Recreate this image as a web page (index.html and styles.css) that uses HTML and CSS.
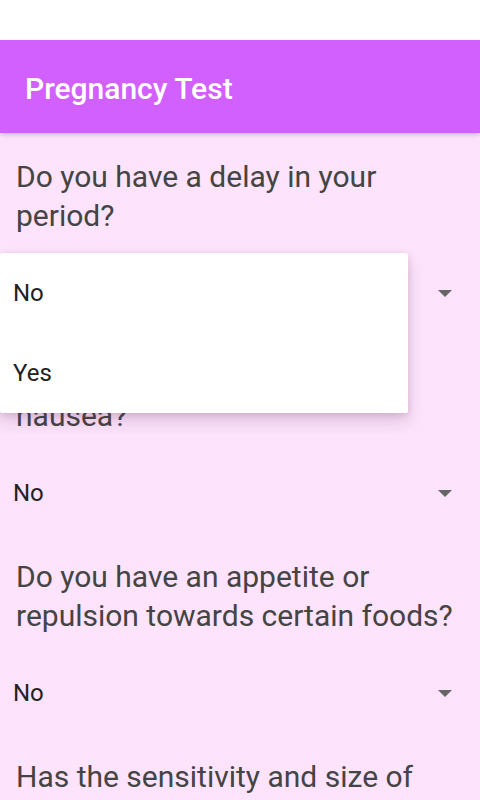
FILE: index.html
```html
<!DOCTYPE html>
<html lang="en">
<head>
<meta charset="utf-8">
<title>Pregnancy Test</title>
<link rel="stylesheet" href="styles.css">
</head>
<body>
<div class="app">
  <div class="status-bar"></div>
  <header class="toolbar">
    <h1 class="toolbar-title">Pregnancy Test</h1>
  </header>
  <main class="content">
    <section class="question-block">
      <p class="question">Do you have a delay in your period?</p>
      <div class="spinner">
        <span class="spinner-value">No</span>
        <svg class="spinner-arrow" width="14" height="7" viewBox="0 0 14 7"><polygon points="0,0 14,0 7,7"/></svg>
      </div>
      <div class="dropdown">
        <div class="dropdown-item">No</div>
        <div class="dropdown-item">Yes</div>
      </div>
    </section>
    <section class="question-block">
      <p class="question">Do you experience frequent nausea?</p>
      <div class="spinner">
        <span class="spinner-value">No</span>
        <svg class="spinner-arrow" width="14" height="7" viewBox="0 0 14 7"><polygon points="0,0 14,0 7,7"/></svg>
      </div>
    </section>
    <section class="question-block">
      <p class="question">Do you have an appetite or repulsion towards certain foods?</p>
      <div class="spinner">
        <span class="spinner-value">No</span>
        <svg class="spinner-arrow" width="14" height="7" viewBox="0 0 14 7"><polygon points="0,0 14,0 7,7"/></svg>
      </div>
    </section>
    <section class="question-block">
      <p class="question">Has the sensitivity and size of your breasts changed?</p>
      <div class="spinner">
        <span class="spinner-value">No</span>
        <svg class="spinner-arrow" width="14" height="7" viewBox="0 0 14 7"><polygon points="0,0 14,0 7,7"/></svg>
      </div>
    </section>
  </main>
</div>
</body>
</html>
```

FILE: styles.css
```css
html, body {
  margin: 0;
  padding: 0;
  height: 800px;
  overflow: hidden;
}

body {
  font-family: Roboto, "Noto Sans", sans-serif;
  background: #fde3fb;
}

.app {
  height: 800px;
  overflow: hidden;
  display: flex;
  flex-direction: column;
}

.status-bar {
  height: 40px;
  flex: none;
  background: #ffffff;
}

.toolbar {
  height: 93px;
  flex: none;
  background: #d260fe;
  display: flex;
  align-items: center;
  padding: 4px 0 0 25px;
  box-sizing: border-box;
  box-shadow: 0 2px 4px rgba(0, 0, 0, 0.18);
  position: relative;
  z-index: 1;
}

.toolbar-title {
  margin: 0;
  color: #ffffff;
  font-size: 30px;
  font-weight: 500;
  line-height: 36px;
}

.content {
  flex: 1;
  padding-top: 24px;
}

.question-block {
  position: relative;
  margin-bottom: 24px;
}

.question {
  margin: 0;
  padding: 0 16px;
  font-size: 30px;
  line-height: 39px;
  color: #444444;
}

.spinner {
  margin-top: 18px;
  height: 80px;
  display: flex;
  align-items: center;
  justify-content: space-between;
  padding: 0 28px 0 13px;
}

.spinner-value {
  font-size: 24px;
  color: #222222;
}

.spinner-arrow {
  fill: #666666;
}

.dropdown {
  position: absolute;
  left: 0;
  top: 96px;
  width: 408px;
  background: #ffffff;
  border-radius: 2px;
  box-shadow: 0 8px 16px rgba(90, 40, 90, 0.18), 0 2px 6px rgba(90, 40, 90, 0.14);
  z-index: 2;
}

.dropdown-item {
  height: 80px;
  display: flex;
  align-items: center;
  padding-left: 13px;
  font-size: 24px;
  color: #222222;
}
```
